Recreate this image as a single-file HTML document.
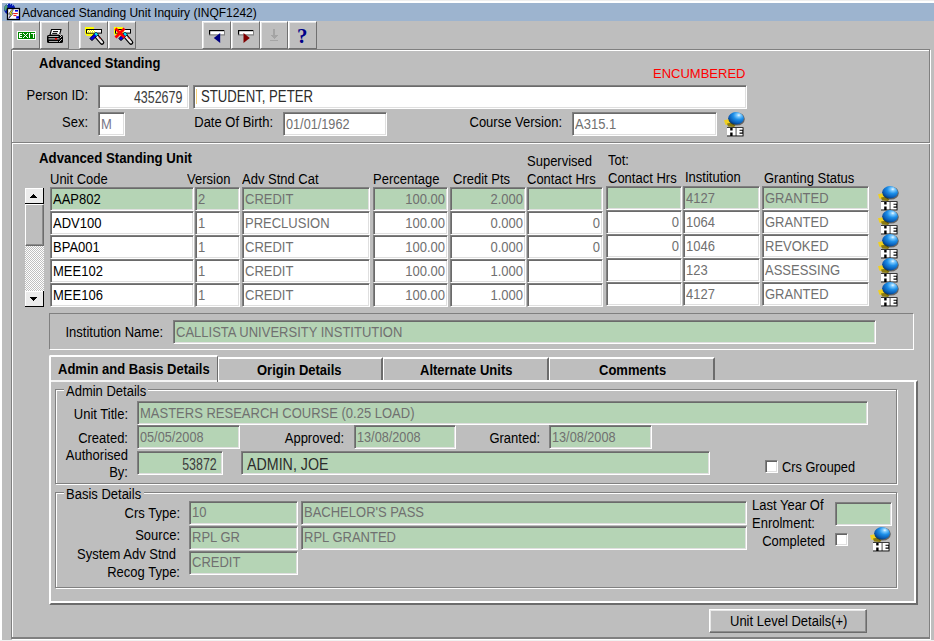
<!DOCTYPE html>
<html><head><meta charset="utf-8"><title>Advanced Standing Unit Inquiry</title>
<style>
html,body{margin:0;padding:0;width:934px;height:641px;overflow:hidden;background:#bebebe;}
body{position:relative;font-family:"Liberation Sans", sans-serif;}
body div, body svg, body span.t{position:absolute;}
div svg{position:absolute;}
span.t{white-space:pre;display:block;}
</style></head><body>
<div style="left:0;top:0;width:934px;height:641px;background:#bebebe"></div>
<div style="left:0px;top:0px;width:934px;height:3px;background:#fff"></div>
<div style="left:0px;top:0px;width:934px;height:1px;background:#eeeeee"></div>
<div style="left:0px;top:0px;width:2px;height:641px;background:#fff"></div>
<div style="left:0px;top:640px;width:934px;height:1px;background:#f0f0f0"></div>
<div style="left:2px;top:3px;width:932px;height:18px;background:#9db4cf"></div>
<svg style="left:0;top:0" width="22" height="22" viewBox="0 0 22 22">
<circle cx="9.6" cy="9" r="5.6" fill="#0018b0"/>
<path d="M4.2 7.5 Q5 5 7 4.4 L7.6 7 L5.6 11 L4.4 10 Z" fill="#50a070"/>
<path d="M7 4 h1 v1 h-1z M10 3.6 h1 v1 h-1z M12 4.4 h1 v1 h-1z" fill="#c0e0ff"/>
<rect x="7.5" y="8.5" width="12" height="11" fill="#fff" stroke="#000" stroke-width="1.3"/>
<path d="M11.8 9.6 L8.6 14.2 L10.6 14.2 L8.8 18.4 L13.4 13.2 L11.4 13.2 L13.4 9.6 Z" fill="#ffff00" stroke="#000080" stroke-width="0.6"/>
<rect x="15" y="10" width="3" height="1.6" fill="#0000e0"/>
<rect x="13.4" y="13" width="4.4" height="1.1" fill="#f02020"/>
<rect x="13.4" y="15" width="3" height="1.1" fill="#f02020"/>
<rect x="16.2" y="16.2" width="2.8" height="2.4" fill="#0000e0"/>
</svg>
<span class="t" style="left:22px;top:6px;font-size:12px;line-height:14px;color:#000;">Advanced Standing Unit Inquiry (INQF1242)</span>
<div style="left:12px;top:21px;width:28px;height:28px;box-sizing:border-box;border:1px solid;border-color:#fff #707070 #707070 #fff;box-shadow:inset 1px 1px #e4e4e4;background:#bebebe"><svg style="left:0px;top:0px" width="28" height="28" viewBox="0 0 28 28" shape-rendering="crispEdges">
<rect x="4" y="9" width="19" height="9" fill="#fff"/><rect x="5" y="10" width="17" height="7" fill="#008800"/>
<path d="M6 11h3v1h-2v1h2v1h-2v1h2v1h-3z" fill="#fff"/>
<path d="M10 11h1v1h-1zM14 11h1v1h-1zM11 12h1v1h-1zM13 12h1v1h-1zM12 13h1v1h-1zM11 14h1v1h-1zM13 14h1v1h-1zM10 15h1v1h-1zM14 15h1v1h-1z" fill="#fff"/>
<path d="M16 11h1v5h-1z" fill="#fff"/>
<path d="M18 11h4v1h-1.5v4h-1v-4h-1.5z" fill="#fff"/>
</svg></div>
<div style="left:40px;top:21px;width:29px;height:28px;box-sizing:border-box;border:1px solid;border-color:#fff #707070 #707070 #fff;box-shadow:inset 1px 1px #e4e4e4;background:#bebebe"><svg style="left:-1px;top:-1px" width="28" height="28" viewBox="0 0 28 28">
<path d="M11.5 8.5 L21 8.5 L19.5 14 L10 14 Z" fill="#fff" stroke="#000" stroke-width="1.1"/>
<path d="M13 10.6h5M12.2 12.4h5" stroke="#000" stroke-width="1"/>
<rect x="7" y="14" width="16" height="8" rx="1.6" fill="#000"/>
<rect x="8.5" y="15" width="10" height="1" fill="#b8b8b8"/>
<rect x="8.5" y="17" width="11" height="1.6" fill="#8a8a8a"/>
<rect x="15" y="17" width="2" height="1.6" fill="#ff0000"/>
<rect x="9" y="20" width="9" height="1" fill="#a8a8a8"/>
<path d="M19 13h1v1h-1zM21 13h1v1h-1zM20 14h1v1h-1zM22 15h-1v1h1zM20 16h1v1h-1zM21 18h1v1h-1zM20 19h1v1h-1zM19 20h1v1h-1z" fill="#c8c8c8"/>
</svg></div>
<div style="left:79px;top:21px;width:29px;height:28px;box-sizing:border-box;border:1px solid;border-color:#fff #707070 #707070 #fff;box-shadow:inset 1px 1px #e4e4e4;background:#bebebe"><svg style="left:-1px;top:-1px" width="28" height="28" viewBox="0 0 28 28">
<path d="M6 6 H15 V12.5 L13 15 H8 L6 13 Z" fill="#ffff00"/>
<rect x="7.5" y="8.5" width="15" height="3.6" fill="#fff" stroke="#000" stroke-width="1"/>
<path d="M8 9h1v1h-1zM10 9h1v1h-1zM12 9h1v1h-1zM14 9h1v1h-1zM9 10h1v1h-1zM11 10h1v1h-1zM13 10h1v1h-1zM15 10h1v1h-1zM8 11h1v1h-1zM10 11h1v1h-1zM12 11h1v1h-1zM14 11h1v1h-1z" fill="#ffff00"/>
<path d="M17.2 14.8 L23 21.5" stroke="#000" stroke-width="4.6" stroke-linecap="round"/>
<path d="M17.2 14.8 L22.8 21.3" stroke="#e8e8e8" stroke-width="2.4" stroke-linecap="round"/>
<path d="M20 16.4 L21.6 18" stroke="#ff0000" stroke-width="1"/>
<path d="M10.8 17.6 L17 11.2 L19.2 13.6 L13 19.6 Z" fill="#0000ee" stroke="#000" stroke-width="0.9"/>
<path d="M15.4 12.9 L17 11.3 L19 13.5 L17.4 15 Z" fill="#00e8f0"/>
</svg></div>
<div style="left:108px;top:21px;width:28px;height:28px;box-sizing:border-box;border:1px solid;border-color:#fff #707070 #707070 #fff;box-shadow:inset 1px 1px #e4e4e4;background:#bebebe"><svg style="left:-1px;top:-1px" width="28" height="28" viewBox="0 0 28 28">
<path d="M6 6 H15 V12.5 L13 15 H8 L6 13 Z" fill="#ffff00"/>
<rect x="7.5" y="8.5" width="15" height="3.6" fill="#fff" stroke="#000" stroke-width="1"/>
<path d="M8 9h1v1h-1zM10 9h1v1h-1zM12 9h1v1h-1zM14 9h1v1h-1zM9 10h1v1h-1zM11 10h1v1h-1zM13 10h1v1h-1zM15 10h1v1h-1zM8 11h1v1h-1zM10 11h1v1h-1zM12 11h1v1h-1zM14 11h1v1h-1z" fill="#ffff00"/>
<path d="M17.2 14.8 L23 21.5" stroke="#000" stroke-width="4.6" stroke-linecap="round"/>
<path d="M17.2 14.8 L22.8 21.3" stroke="#e8e8e8" stroke-width="2.4" stroke-linecap="round"/>
<path d="M20 16.4 L21.6 18" stroke="#ff0000" stroke-width="1"/>
<path d="M10.8 17.6 L17 11.2 L19.2 13.6 L13 19.6 Z" fill="#0000ee" stroke="#000" stroke-width="0.9"/>
<path d="M15.4 12.9 L17 11.3 L19 13.5 L17.4 15 Z" fill="#00e8f0"/>
<path d="M7.5 7.5 L16.5 16.5 M16.5 7.5 L7.5 16.5" stroke="#ff0000" stroke-width="2.8"/></svg></div>
<div style="left:202px;top:21px;width:29px;height:28px;box-sizing:border-box;border:1px solid;border-color:#fff #707070 #707070 #fff;box-shadow:inset 1px 1px #e4e4e4;background:#bebebe"><svg style="left:-1px;top:-1px" width="28" height="28" viewBox="0 0 28 28">
<rect x="7" y="9" width="16" height="5.5" fill="#808080"/><rect x="7" y="9" width="15" height="4.5" fill="#000"/><rect x="8.2" y="10.2" width="13.8" height="3.3" fill="#fff"/>
<path d="M18.2 12 L18.2 22 L11.8 17 Z" fill="#000080"/>
</svg></div>
<div style="left:231px;top:21px;width:29px;height:28px;box-sizing:border-box;border:1px solid;border-color:#fff #707070 #707070 #fff;box-shadow:inset 1px 1px #e4e4e4;background:#bebebe"><svg style="left:-1px;top:-1px" width="28" height="28" viewBox="0 0 28 28">
<rect x="7" y="9" width="16" height="5.5" fill="#808080"/><rect x="7" y="9" width="15" height="4.5" fill="#000"/><rect x="8.2" y="10.2" width="13.8" height="3.3" fill="#fff"/>
<path d="M12.5 12 L12.5 22 L18.8 17 Z" fill="#800000"/>
</svg></div>
<div style="left:260px;top:21px;width:28px;height:28px;box-sizing:border-box;border:1px solid;border-color:#fff #707070 #707070 #fff;box-shadow:inset 1px 1px #e4e4e4;background:#bebebe"><svg style="left:-1px;top:-1px" width="28" height="28" viewBox="0 0 28 28" shape-rendering="crispEdges">
<path d="M13 8h2v6h3l-4 4l-4-4h3z" fill="#a4a4a4"/>
<rect x="10" y="19" width="8" height="1" fill="#a4a4a4"/>
</svg></div>
<div style="left:288px;top:21px;width:29px;height:28px;box-sizing:border-box;border:1px solid;border-color:#fff #707070 #707070 #fff;box-shadow:inset 1px 1px #e4e4e4;background:#bebebe"><svg style="left:-1px;top:-1px" width="28" height="28" viewBox="0 0 28 28">
<text x="14.3" y="21.5" font-family="Liberation Serif" font-weight="bold" font-size="21" fill="#000088" text-anchor="middle">?</text>
</svg></div>
<div style="left:12px;top:143px;width:919px;height:496px;border:1px solid #fff;box-sizing:border-box"></div>
<div style="left:11px;top:142px;width:919px;height:496px;border:1px solid #808080;box-sizing:border-box"></div>
<div style="left:11px;top:638px;width:919px;height:1px;background:#808080"></div>
<div style="left:12px;top:639px;width:919px;height:1px;background:#fff"></div>
<div style="left:12px;top:50px;width:919px;height:94px;border:1px solid #fff;box-sizing:border-box"></div>
<div style="left:11px;top:49px;width:919px;height:94px;border:1px solid #808080;box-sizing:border-box"></div>
<span class="t" style="left:39px;top:56px;font-size:13px;line-height:15px;color:#000;font-weight:bold;transform:scale(1.0000,1.1000);transform-origin:0 12px;">Advanced Standing</span>
<span class="t" style="left:653px;top:66px;font-size:13px;line-height:15px;color:#ff0000;">ENCUMBERED</span>
<span class="t" style="right:846px;top:88px;font-size:13px;line-height:15px;color:#000;transform:scale(1.0000,1.1000);transform-origin:100% 12px;">Person ID:</span>
<div style="left:98px;top:85px;width:91px;height:24px;background:#fff;border:1px solid;border-color:#808080 #fff #fff #808080;box-shadow:inset 1px 1px #6a6a6a,inset -1px -1px #dfdfdf;box-sizing:border-box"></div>
<span class="t" style="right:752px;top:89px;font-size:15px;line-height:17px;color:#3c3c3c;transform:scale(0.8306,1.0800);transform-origin:100% 14px;">4352679</span>
<div style="left:193px;top:85px;width:554px;height:24px;background:#fff;border:1px solid;border-color:#808080 #fff #fff #808080;box-shadow:inset 1px 1px #6a6a6a,inset -1px -1px #dfdfdf;box-sizing:border-box"></div>
<span class="t" style="left:201px;top:88px;font-size:15px;line-height:17px;color:#2c2c2c;transform:scale(0.8783,1.0800);transform-origin:0 14px;">STUDENT, PETER</span>
<div style="left:196px;top:89px;width:1px;height:15px;background:#f6d27a"></div>
<span class="t" style="right:846px;top:115px;font-size:13px;line-height:15px;color:#000;transform:scale(1.0000,1.1000);transform-origin:100% 12px;">Sex:</span>
<div style="left:98px;top:112px;width:27px;height:24px;background:#fff;border:1px solid;border-color:#808080 #fff #fff #808080;box-shadow:inset 1px 1px #6a6a6a,inset -1px -1px #dfdfdf;box-sizing:border-box"></div>
<span class="t" style="left:101px;top:117px;font-size:13px;line-height:15px;color:#787888;transform:scale(1.0000,1.1000);transform-origin:0 12px;">M</span>
<span class="t" style="right:661px;top:115px;font-size:13px;line-height:15px;color:#000;transform:scale(1.0000,1.1000);transform-origin:100% 12px;">Date Of Birth:</span>
<div style="left:283px;top:112px;width:104px;height:24px;background:#fff;border:1px solid;border-color:#808080 #fff #fff #808080;box-shadow:inset 1px 1px #6a6a6a,inset -1px -1px #dfdfdf;box-sizing:border-box"></div>
<span class="t" style="left:286px;top:117px;font-size:13px;line-height:15px;color:#707070;transform:scale(0.9761,1.1000);transform-origin:0 12px;">01/01/1962</span>
<span class="t" style="right:372px;top:115px;font-size:13px;line-height:15px;color:#000;transform:scale(1.0000,1.1000);transform-origin:100% 12px;">Course Version:</span>
<div style="left:572px;top:112px;width:145px;height:24px;background:#fff;border:1px solid;border-color:#808080 #fff #fff #808080;box-shadow:inset 1px 1px #6a6a6a,inset -1px -1px #dfdfdf;box-sizing:border-box"></div>
<span class="t" style="left:575px;top:117px;font-size:13px;line-height:15px;color:#707070;transform:scale(1.0000,1.1000);transform-origin:0 12px;">A315.1</span>
<svg style="left:723px;top:112px" width="22" height="25" viewBox="0 0 22 25">
<defs><radialGradient id="hb723_112" cx="0.68" cy="0.25" r="0.8"><stop offset="0" stop-color="#f0faff"/><stop offset="0.16" stop-color="#7ccaff"/><stop offset="0.45" stop-color="#1c8ee8"/><stop offset="0.8" stop-color="#0a5cb4"/><stop offset="1" stop-color="#04386e"/></radialGradient></defs>
<path d="M1 8.2 L5.5 7.2 L8 11 L6.5 13 L2.5 12.8 Z" fill="#f0d020"/>
<path d="M4 11.5 L9 10.5 L12.5 13.5 L11 15 L5 14.5 Z" fill="#8a7a10"/>
<ellipse cx="13.8" cy="7" rx="8" ry="6.6" fill="#1a1a1a" opacity="0.55"/>
<ellipse cx="13" cy="6.3" rx="7.8" ry="6.2" fill="url(#hb723_112)"/>
<rect x="4" y="15.3" width="16.5" height="9.1" fill="#000"/>
<path d="M4 16h3.2v2.5h2.4v-2.5h3.1v7.6h-3.1v-3.1h-2.4v3.1h-3.2z" fill="#fff"/>
<path d="M13.4 16h6.2v1.7h-3.1v1.1h2.8v1.6h-2.8v1.4h3.1v1.8h-6.2z" fill="#fff"/>
</svg>
<span class="t" style="left:39px;top:151px;font-size:13px;line-height:15px;color:#000;font-weight:bold;transform:scale(1.0185,1.1000);transform-origin:0 12px;">Advanced Standing Unit</span>
<span class="t" style="left:50px;top:172px;font-size:13px;line-height:15px;color:#000;transform:scale(1.0000,1.1000);transform-origin:0 12px;">Unit Code</span>
<span class="t" style="left:187px;top:172px;font-size:13px;line-height:15px;color:#000;transform:scale(1.0000,1.1000);transform-origin:0 12px;">Version</span>
<span class="t" style="left:242px;top:172px;font-size:13px;line-height:15px;color:#000;transform:scale(1.0000,1.1000);transform-origin:0 12px;">Adv Stnd Cat</span>
<span class="t" style="left:373px;top:172px;font-size:13px;line-height:15px;color:#000;transform:scale(1.0000,1.1000);transform-origin:0 12px;">Percentage</span>
<span class="t" style="left:453px;top:172px;font-size:13px;line-height:15px;color:#000;transform:scale(1.0000,1.1000);transform-origin:0 12px;">Credit Pts</span>
<span class="t" style="left:527px;top:154px;font-size:13px;line-height:15px;color:#000;transform:scale(1.0000,1.1000);transform-origin:0 12px;">Supervised</span>
<span class="t" style="left:527px;top:172px;font-size:13px;line-height:15px;color:#000;transform:scale(1.0000,1.1000);transform-origin:0 12px;">Contact Hrs</span>
<span class="t" style="left:608px;top:153px;font-size:13px;line-height:15px;color:#000;transform:scale(1.0000,1.1000);transform-origin:0 12px;">Tot:</span>
<span class="t" style="left:608px;top:171px;font-size:13px;line-height:15px;color:#000;transform:scale(1.0000,1.1000);transform-origin:0 12px;">Contact Hrs</span>
<span class="t" style="left:685px;top:170px;font-size:13px;line-height:15px;color:#000;transform:scale(1.0000,1.1000);transform-origin:0 12px;">Institution</span>
<span class="t" style="left:764px;top:171px;font-size:13px;line-height:15px;color:#000;transform:scale(1.0000,1.1000);transform-origin:0 12px;">Granting Status</span>
<div style="left:25px;top:188px;width:19px;height:16px;background:#ececec;box-sizing:border-box;border-right:1px solid #000;border-bottom:1px solid #000;box-shadow:inset 1px 1px #fff">
<svg style="left:5px;top:6px" width="7" height="4" viewBox="0 0 7 4" shape-rendering="crispEdges"><path d="M3 0h1v1h1v1h1v1h1v1h-7v-1h1v-1h1v-1h1z" fill="#000"/></svg></div>
<div style="left:25px;top:204px;width:19px;height:42px;background:#bebebe;box-sizing:border-box;border:1px solid;border-color:#fff #6c6c6c #6c6c6c #fff;box-shadow:inset -1px -1px #8c8c8c"></div>
<div style="left:25px;top:246px;width:19px;height:45px;background-color:#fff;background-image:repeating-conic-gradient(#c0c0c0 0 25%, #fff 0 50%);background-size:2px 2px;"></div>
<div style="left:25px;top:291px;width:19px;height:16px;background:#ececec;box-sizing:border-box;border-right:1px solid #000;border-bottom:1px solid #000;box-shadow:inset 1px 1px #fff">
<svg style="left:5px;top:6px" width="7" height="4" viewBox="0 0 7 4" shape-rendering="crispEdges"><path d="M0 0h7v1h-1v1h-1v1h-1v1h-1v-1h-1v-1h-1v-1h-1z" fill="#000"/></svg></div>
<div style="left:50px;top:187px;width:144px;height:24px;background:#b5d4b5;border:1px solid;border-color:#808080 #fff #fff #808080;box-shadow:inset 1px 1px #6a6a6a,inset -1px -1px #dfdfdf;box-sizing:border-box"></div>
<span class="t" style="left:53px;top:192px;font-size:13px;line-height:15px;color:#000;transform:scale(1.0000,1.1000);transform-origin:0 12px;">AAP802</span>
<div style="left:195px;top:187px;width:45px;height:24px;background:#b5d4b5;border:1px solid;border-color:#808080 #fff #fff #808080;box-shadow:inset 1px 1px #6a6a6a,inset -1px -1px #dfdfdf;box-sizing:border-box"></div>
<span class="t" style="left:198px;top:192px;font-size:13px;line-height:15px;color:#707070;transform:scale(1.0000,1.1000);transform-origin:0 12px;">2</span>
<div style="left:242px;top:187px;width:128px;height:24px;background:#b5d4b5;border:1px solid;border-color:#808080 #fff #fff #808080;box-shadow:inset 1px 1px #6a6a6a,inset -1px -1px #dfdfdf;box-sizing:border-box"></div>
<span class="t" style="left:245px;top:192px;font-size:13px;line-height:15px;color:#707070;transform:scale(1.0000,1.1000);transform-origin:0 12px;">CREDIT</span>
<div style="left:373px;top:187px;width:75px;height:24px;background:#b5d4b5;border:1px solid;border-color:#808080 #fff #fff #808080;box-shadow:inset 1px 1px #6a6a6a,inset -1px -1px #dfdfdf;box-sizing:border-box"></div>
<span class="t" style="right:489px;top:192px;font-size:13px;line-height:15px;color:#707070;transform:scale(1.0000,1.1000);transform-origin:100% 12px;">100.00</span>
<div style="left:450px;top:187px;width:76px;height:24px;background:#b5d4b5;border:1px solid;border-color:#808080 #fff #fff #808080;box-shadow:inset 1px 1px #6a6a6a,inset -1px -1px #dfdfdf;box-sizing:border-box"></div>
<span class="t" style="right:411px;top:192px;font-size:13px;line-height:15px;color:#707070;transform:scale(1.0000,1.1000);transform-origin:100% 12px;">2.000</span>
<div style="left:527px;top:187px;width:76px;height:24px;background:#b5d4b5;border:1px solid;border-color:#808080 #fff #fff #808080;box-shadow:inset 1px 1px #6a6a6a,inset -1px -1px #dfdfdf;box-sizing:border-box"></div>
<div style="left:606px;top:186px;width:76px;height:24px;background:#b5d4b5;border:1px solid;border-color:#808080 #fff #fff #808080;box-shadow:inset 1px 1px #6a6a6a,inset -1px -1px #dfdfdf;box-sizing:border-box"></div>
<div style="left:683px;top:186px;width:77px;height:24px;background:#b5d4b5;border:1px solid;border-color:#808080 #fff #fff #808080;box-shadow:inset 1px 1px #6a6a6a,inset -1px -1px #dfdfdf;box-sizing:border-box"></div>
<span class="t" style="left:686px;top:191px;font-size:13px;line-height:15px;color:#707070;transform:scale(1.0000,1.1000);transform-origin:0 12px;">4127</span>
<div style="left:762px;top:186px;width:107px;height:24px;background:#b5d4b5;border:1px solid;border-color:#808080 #fff #fff #808080;box-shadow:inset 1px 1px #6a6a6a,inset -1px -1px #dfdfdf;box-sizing:border-box"></div>
<span class="t" style="left:765px;top:191px;font-size:13px;line-height:15px;color:#707070;transform:scale(1.0000,1.1000);transform-origin:0 12px;">GRANTED</span>
<svg style="left:877px;top:186px" width="22" height="25" viewBox="0 0 22 25">
<defs><radialGradient id="hb877_186" cx="0.68" cy="0.25" r="0.8"><stop offset="0" stop-color="#f0faff"/><stop offset="0.16" stop-color="#7ccaff"/><stop offset="0.45" stop-color="#1c8ee8"/><stop offset="0.8" stop-color="#0a5cb4"/><stop offset="1" stop-color="#04386e"/></radialGradient></defs>
<path d="M1 8.2 L5.5 7.2 L8 11 L6.5 13 L2.5 12.8 Z" fill="#f0d020"/>
<path d="M4 11.5 L9 10.5 L12.5 13.5 L11 15 L5 14.5 Z" fill="#8a7a10"/>
<ellipse cx="13.8" cy="7" rx="8" ry="6.6" fill="#1a1a1a" opacity="0.55"/>
<ellipse cx="13" cy="6.3" rx="7.8" ry="6.2" fill="url(#hb877_186)"/>
<rect x="4" y="15.3" width="16.5" height="9.1" fill="#000"/>
<path d="M4 16h3.2v2.5h2.4v-2.5h3.1v7.6h-3.1v-3.1h-2.4v3.1h-3.2z" fill="#fff"/>
<path d="M13.4 16h6.2v1.7h-3.1v1.1h2.8v1.6h-2.8v1.4h3.1v1.8h-6.2z" fill="#fff"/>
</svg>
<div style="left:50px;top:211px;width:144px;height:24px;background:#fff;border:1px solid;border-color:#808080 #fff #fff #808080;box-shadow:inset 1px 1px #6a6a6a,inset -1px -1px #dfdfdf;box-sizing:border-box"></div>
<span class="t" style="left:53px;top:216px;font-size:13px;line-height:15px;color:#000;transform:scale(1.0000,1.1000);transform-origin:0 12px;">ADV100</span>
<div style="left:195px;top:211px;width:45px;height:24px;background:#fff;border:1px solid;border-color:#808080 #fff #fff #808080;box-shadow:inset 1px 1px #6a6a6a,inset -1px -1px #dfdfdf;box-sizing:border-box"></div>
<span class="t" style="left:198px;top:216px;font-size:13px;line-height:15px;color:#707070;transform:scale(1.0000,1.1000);transform-origin:0 12px;">1</span>
<div style="left:242px;top:211px;width:128px;height:24px;background:#fff;border:1px solid;border-color:#808080 #fff #fff #808080;box-shadow:inset 1px 1px #6a6a6a,inset -1px -1px #dfdfdf;box-sizing:border-box"></div>
<span class="t" style="left:245px;top:216px;font-size:13px;line-height:15px;color:#707070;transform:scale(1.0000,1.1000);transform-origin:0 12px;">PRECLUSION</span>
<div style="left:373px;top:211px;width:75px;height:24px;background:#fff;border:1px solid;border-color:#808080 #fff #fff #808080;box-shadow:inset 1px 1px #6a6a6a,inset -1px -1px #dfdfdf;box-sizing:border-box"></div>
<span class="t" style="right:489px;top:216px;font-size:13px;line-height:15px;color:#707070;transform:scale(1.0000,1.1000);transform-origin:100% 12px;">100.00</span>
<div style="left:450px;top:211px;width:76px;height:24px;background:#fff;border:1px solid;border-color:#808080 #fff #fff #808080;box-shadow:inset 1px 1px #6a6a6a,inset -1px -1px #dfdfdf;box-sizing:border-box"></div>
<span class="t" style="right:411px;top:216px;font-size:13px;line-height:15px;color:#707070;transform:scale(1.0000,1.1000);transform-origin:100% 12px;">0.000</span>
<div style="left:527px;top:211px;width:76px;height:24px;background:#fff;border:1px solid;border-color:#808080 #fff #fff #808080;box-shadow:inset 1px 1px #6a6a6a,inset -1px -1px #dfdfdf;box-sizing:border-box"></div>
<span class="t" style="right:334px;top:216px;font-size:13px;line-height:15px;color:#707070;transform:scale(1.0000,1.1000);transform-origin:100% 12px;">0</span>
<div style="left:606px;top:210px;width:76px;height:24px;background:#fff;border:1px solid;border-color:#808080 #fff #fff #808080;box-shadow:inset 1px 1px #6a6a6a,inset -1px -1px #dfdfdf;box-sizing:border-box"></div>
<span class="t" style="right:255px;top:215px;font-size:13px;line-height:15px;color:#707070;transform:scale(1.0000,1.1000);transform-origin:100% 12px;">0</span>
<div style="left:683px;top:210px;width:77px;height:24px;background:#fff;border:1px solid;border-color:#808080 #fff #fff #808080;box-shadow:inset 1px 1px #6a6a6a,inset -1px -1px #dfdfdf;box-sizing:border-box"></div>
<span class="t" style="left:686px;top:215px;font-size:13px;line-height:15px;color:#707070;transform:scale(1.0000,1.1000);transform-origin:0 12px;">1064</span>
<div style="left:762px;top:210px;width:107px;height:24px;background:#fff;border:1px solid;border-color:#808080 #fff #fff #808080;box-shadow:inset 1px 1px #6a6a6a,inset -1px -1px #dfdfdf;box-sizing:border-box"></div>
<span class="t" style="left:765px;top:215px;font-size:13px;line-height:15px;color:#707070;transform:scale(1.0000,1.1000);transform-origin:0 12px;">GRANTED</span>
<svg style="left:877px;top:210px" width="22" height="25" viewBox="0 0 22 25">
<defs><radialGradient id="hb877_210" cx="0.68" cy="0.25" r="0.8"><stop offset="0" stop-color="#f0faff"/><stop offset="0.16" stop-color="#7ccaff"/><stop offset="0.45" stop-color="#1c8ee8"/><stop offset="0.8" stop-color="#0a5cb4"/><stop offset="1" stop-color="#04386e"/></radialGradient></defs>
<path d="M1 8.2 L5.5 7.2 L8 11 L6.5 13 L2.5 12.8 Z" fill="#f0d020"/>
<path d="M4 11.5 L9 10.5 L12.5 13.5 L11 15 L5 14.5 Z" fill="#8a7a10"/>
<ellipse cx="13.8" cy="7" rx="8" ry="6.6" fill="#1a1a1a" opacity="0.55"/>
<ellipse cx="13" cy="6.3" rx="7.8" ry="6.2" fill="url(#hb877_210)"/>
<rect x="4" y="15.3" width="16.5" height="9.1" fill="#000"/>
<path d="M4 16h3.2v2.5h2.4v-2.5h3.1v7.6h-3.1v-3.1h-2.4v3.1h-3.2z" fill="#fff"/>
<path d="M13.4 16h6.2v1.7h-3.1v1.1h2.8v1.6h-2.8v1.4h3.1v1.8h-6.2z" fill="#fff"/>
</svg>
<div style="left:50px;top:235px;width:144px;height:24px;background:#fff;border:1px solid;border-color:#808080 #fff #fff #808080;box-shadow:inset 1px 1px #6a6a6a,inset -1px -1px #dfdfdf;box-sizing:border-box"></div>
<span class="t" style="left:53px;top:240px;font-size:13px;line-height:15px;color:#000;transform:scale(1.0000,1.1000);transform-origin:0 12px;">BPA001</span>
<div style="left:195px;top:235px;width:45px;height:24px;background:#fff;border:1px solid;border-color:#808080 #fff #fff #808080;box-shadow:inset 1px 1px #6a6a6a,inset -1px -1px #dfdfdf;box-sizing:border-box"></div>
<span class="t" style="left:198px;top:240px;font-size:13px;line-height:15px;color:#707070;transform:scale(1.0000,1.1000);transform-origin:0 12px;">1</span>
<div style="left:242px;top:235px;width:128px;height:24px;background:#fff;border:1px solid;border-color:#808080 #fff #fff #808080;box-shadow:inset 1px 1px #6a6a6a,inset -1px -1px #dfdfdf;box-sizing:border-box"></div>
<span class="t" style="left:245px;top:240px;font-size:13px;line-height:15px;color:#707070;transform:scale(1.0000,1.1000);transform-origin:0 12px;">CREDIT</span>
<div style="left:373px;top:235px;width:75px;height:24px;background:#fff;border:1px solid;border-color:#808080 #fff #fff #808080;box-shadow:inset 1px 1px #6a6a6a,inset -1px -1px #dfdfdf;box-sizing:border-box"></div>
<span class="t" style="right:489px;top:240px;font-size:13px;line-height:15px;color:#707070;transform:scale(1.0000,1.1000);transform-origin:100% 12px;">100.00</span>
<div style="left:450px;top:235px;width:76px;height:24px;background:#fff;border:1px solid;border-color:#808080 #fff #fff #808080;box-shadow:inset 1px 1px #6a6a6a,inset -1px -1px #dfdfdf;box-sizing:border-box"></div>
<span class="t" style="right:411px;top:240px;font-size:13px;line-height:15px;color:#707070;transform:scale(1.0000,1.1000);transform-origin:100% 12px;">0.000</span>
<div style="left:527px;top:235px;width:76px;height:24px;background:#fff;border:1px solid;border-color:#808080 #fff #fff #808080;box-shadow:inset 1px 1px #6a6a6a,inset -1px -1px #dfdfdf;box-sizing:border-box"></div>
<span class="t" style="right:334px;top:240px;font-size:13px;line-height:15px;color:#707070;transform:scale(1.0000,1.1000);transform-origin:100% 12px;">0</span>
<div style="left:606px;top:234px;width:76px;height:24px;background:#fff;border:1px solid;border-color:#808080 #fff #fff #808080;box-shadow:inset 1px 1px #6a6a6a,inset -1px -1px #dfdfdf;box-sizing:border-box"></div>
<span class="t" style="right:255px;top:239px;font-size:13px;line-height:15px;color:#707070;transform:scale(1.0000,1.1000);transform-origin:100% 12px;">0</span>
<div style="left:683px;top:234px;width:77px;height:24px;background:#fff;border:1px solid;border-color:#808080 #fff #fff #808080;box-shadow:inset 1px 1px #6a6a6a,inset -1px -1px #dfdfdf;box-sizing:border-box"></div>
<span class="t" style="left:686px;top:239px;font-size:13px;line-height:15px;color:#707070;transform:scale(1.0000,1.1000);transform-origin:0 12px;">1046</span>
<div style="left:762px;top:234px;width:107px;height:24px;background:#fff;border:1px solid;border-color:#808080 #fff #fff #808080;box-shadow:inset 1px 1px #6a6a6a,inset -1px -1px #dfdfdf;box-sizing:border-box"></div>
<span class="t" style="left:765px;top:239px;font-size:13px;line-height:15px;color:#707070;transform:scale(1.0000,1.1000);transform-origin:0 12px;">REVOKED</span>
<svg style="left:877px;top:234px" width="22" height="25" viewBox="0 0 22 25">
<defs><radialGradient id="hb877_234" cx="0.68" cy="0.25" r="0.8"><stop offset="0" stop-color="#f0faff"/><stop offset="0.16" stop-color="#7ccaff"/><stop offset="0.45" stop-color="#1c8ee8"/><stop offset="0.8" stop-color="#0a5cb4"/><stop offset="1" stop-color="#04386e"/></radialGradient></defs>
<path d="M1 8.2 L5.5 7.2 L8 11 L6.5 13 L2.5 12.8 Z" fill="#f0d020"/>
<path d="M4 11.5 L9 10.5 L12.5 13.5 L11 15 L5 14.5 Z" fill="#8a7a10"/>
<ellipse cx="13.8" cy="7" rx="8" ry="6.6" fill="#1a1a1a" opacity="0.55"/>
<ellipse cx="13" cy="6.3" rx="7.8" ry="6.2" fill="url(#hb877_234)"/>
<rect x="4" y="15.3" width="16.5" height="9.1" fill="#000"/>
<path d="M4 16h3.2v2.5h2.4v-2.5h3.1v7.6h-3.1v-3.1h-2.4v3.1h-3.2z" fill="#fff"/>
<path d="M13.4 16h6.2v1.7h-3.1v1.1h2.8v1.6h-2.8v1.4h3.1v1.8h-6.2z" fill="#fff"/>
</svg>
<div style="left:50px;top:259px;width:144px;height:24px;background:#fff;border:1px solid;border-color:#808080 #fff #fff #808080;box-shadow:inset 1px 1px #6a6a6a,inset -1px -1px #dfdfdf;box-sizing:border-box"></div>
<span class="t" style="left:53px;top:264px;font-size:13px;line-height:15px;color:#000;transform:scale(1.0000,1.1000);transform-origin:0 12px;">MEE102</span>
<div style="left:195px;top:259px;width:45px;height:24px;background:#fff;border:1px solid;border-color:#808080 #fff #fff #808080;box-shadow:inset 1px 1px #6a6a6a,inset -1px -1px #dfdfdf;box-sizing:border-box"></div>
<span class="t" style="left:198px;top:264px;font-size:13px;line-height:15px;color:#707070;transform:scale(1.0000,1.1000);transform-origin:0 12px;">1</span>
<div style="left:242px;top:259px;width:128px;height:24px;background:#fff;border:1px solid;border-color:#808080 #fff #fff #808080;box-shadow:inset 1px 1px #6a6a6a,inset -1px -1px #dfdfdf;box-sizing:border-box"></div>
<span class="t" style="left:245px;top:264px;font-size:13px;line-height:15px;color:#707070;transform:scale(1.0000,1.1000);transform-origin:0 12px;">CREDIT</span>
<div style="left:373px;top:259px;width:75px;height:24px;background:#fff;border:1px solid;border-color:#808080 #fff #fff #808080;box-shadow:inset 1px 1px #6a6a6a,inset -1px -1px #dfdfdf;box-sizing:border-box"></div>
<span class="t" style="right:489px;top:264px;font-size:13px;line-height:15px;color:#707070;transform:scale(1.0000,1.1000);transform-origin:100% 12px;">100.00</span>
<div style="left:450px;top:259px;width:76px;height:24px;background:#fff;border:1px solid;border-color:#808080 #fff #fff #808080;box-shadow:inset 1px 1px #6a6a6a,inset -1px -1px #dfdfdf;box-sizing:border-box"></div>
<span class="t" style="right:411px;top:264px;font-size:13px;line-height:15px;color:#707070;transform:scale(1.0000,1.1000);transform-origin:100% 12px;">1.000</span>
<div style="left:527px;top:259px;width:76px;height:24px;background:#fff;border:1px solid;border-color:#808080 #fff #fff #808080;box-shadow:inset 1px 1px #6a6a6a,inset -1px -1px #dfdfdf;box-sizing:border-box"></div>
<div style="left:606px;top:258px;width:76px;height:24px;background:#fff;border:1px solid;border-color:#808080 #fff #fff #808080;box-shadow:inset 1px 1px #6a6a6a,inset -1px -1px #dfdfdf;box-sizing:border-box"></div>
<div style="left:683px;top:258px;width:77px;height:24px;background:#fff;border:1px solid;border-color:#808080 #fff #fff #808080;box-shadow:inset 1px 1px #6a6a6a,inset -1px -1px #dfdfdf;box-sizing:border-box"></div>
<span class="t" style="left:686px;top:263px;font-size:13px;line-height:15px;color:#707070;transform:scale(1.0000,1.1000);transform-origin:0 12px;">123</span>
<div style="left:762px;top:258px;width:107px;height:24px;background:#fff;border:1px solid;border-color:#808080 #fff #fff #808080;box-shadow:inset 1px 1px #6a6a6a,inset -1px -1px #dfdfdf;box-sizing:border-box"></div>
<span class="t" style="left:765px;top:263px;font-size:13px;line-height:15px;color:#707070;transform:scale(1.0000,1.1000);transform-origin:0 12px;">ASSESSING</span>
<svg style="left:877px;top:258px" width="22" height="25" viewBox="0 0 22 25">
<defs><radialGradient id="hb877_258" cx="0.68" cy="0.25" r="0.8"><stop offset="0" stop-color="#f0faff"/><stop offset="0.16" stop-color="#7ccaff"/><stop offset="0.45" stop-color="#1c8ee8"/><stop offset="0.8" stop-color="#0a5cb4"/><stop offset="1" stop-color="#04386e"/></radialGradient></defs>
<path d="M1 8.2 L5.5 7.2 L8 11 L6.5 13 L2.5 12.8 Z" fill="#f0d020"/>
<path d="M4 11.5 L9 10.5 L12.5 13.5 L11 15 L5 14.5 Z" fill="#8a7a10"/>
<ellipse cx="13.8" cy="7" rx="8" ry="6.6" fill="#1a1a1a" opacity="0.55"/>
<ellipse cx="13" cy="6.3" rx="7.8" ry="6.2" fill="url(#hb877_258)"/>
<rect x="4" y="15.3" width="16.5" height="9.1" fill="#000"/>
<path d="M4 16h3.2v2.5h2.4v-2.5h3.1v7.6h-3.1v-3.1h-2.4v3.1h-3.2z" fill="#fff"/>
<path d="M13.4 16h6.2v1.7h-3.1v1.1h2.8v1.6h-2.8v1.4h3.1v1.8h-6.2z" fill="#fff"/>
</svg>
<div style="left:50px;top:283px;width:144px;height:24px;background:#fff;border:1px solid;border-color:#808080 #fff #fff #808080;box-shadow:inset 1px 1px #6a6a6a,inset -1px -1px #dfdfdf;box-sizing:border-box"></div>
<span class="t" style="left:53px;top:288px;font-size:13px;line-height:15px;color:#000;transform:scale(1.0000,1.1000);transform-origin:0 12px;">MEE106</span>
<div style="left:195px;top:283px;width:45px;height:24px;background:#fff;border:1px solid;border-color:#808080 #fff #fff #808080;box-shadow:inset 1px 1px #6a6a6a,inset -1px -1px #dfdfdf;box-sizing:border-box"></div>
<span class="t" style="left:198px;top:288px;font-size:13px;line-height:15px;color:#707070;transform:scale(1.0000,1.1000);transform-origin:0 12px;">1</span>
<div style="left:242px;top:283px;width:128px;height:24px;background:#fff;border:1px solid;border-color:#808080 #fff #fff #808080;box-shadow:inset 1px 1px #6a6a6a,inset -1px -1px #dfdfdf;box-sizing:border-box"></div>
<span class="t" style="left:245px;top:288px;font-size:13px;line-height:15px;color:#707070;transform:scale(1.0000,1.1000);transform-origin:0 12px;">CREDIT</span>
<div style="left:373px;top:283px;width:75px;height:24px;background:#fff;border:1px solid;border-color:#808080 #fff #fff #808080;box-shadow:inset 1px 1px #6a6a6a,inset -1px -1px #dfdfdf;box-sizing:border-box"></div>
<span class="t" style="right:489px;top:288px;font-size:13px;line-height:15px;color:#707070;transform:scale(1.0000,1.1000);transform-origin:100% 12px;">100.00</span>
<div style="left:450px;top:283px;width:76px;height:24px;background:#fff;border:1px solid;border-color:#808080 #fff #fff #808080;box-shadow:inset 1px 1px #6a6a6a,inset -1px -1px #dfdfdf;box-sizing:border-box"></div>
<span class="t" style="right:411px;top:288px;font-size:13px;line-height:15px;color:#707070;transform:scale(1.0000,1.1000);transform-origin:100% 12px;">1.000</span>
<div style="left:527px;top:283px;width:76px;height:24px;background:#fff;border:1px solid;border-color:#808080 #fff #fff #808080;box-shadow:inset 1px 1px #6a6a6a,inset -1px -1px #dfdfdf;box-sizing:border-box"></div>
<div style="left:606px;top:282px;width:76px;height:24px;background:#fff;border:1px solid;border-color:#808080 #fff #fff #808080;box-shadow:inset 1px 1px #6a6a6a,inset -1px -1px #dfdfdf;box-sizing:border-box"></div>
<div style="left:683px;top:282px;width:77px;height:24px;background:#fff;border:1px solid;border-color:#808080 #fff #fff #808080;box-shadow:inset 1px 1px #6a6a6a,inset -1px -1px #dfdfdf;box-sizing:border-box"></div>
<span class="t" style="left:686px;top:287px;font-size:13px;line-height:15px;color:#707070;transform:scale(1.0000,1.1000);transform-origin:0 12px;">4127</span>
<div style="left:762px;top:282px;width:107px;height:24px;background:#fff;border:1px solid;border-color:#808080 #fff #fff #808080;box-shadow:inset 1px 1px #6a6a6a,inset -1px -1px #dfdfdf;box-sizing:border-box"></div>
<span class="t" style="left:765px;top:287px;font-size:13px;line-height:15px;color:#707070;transform:scale(1.0000,1.1000);transform-origin:0 12px;">GRANTED</span>
<svg style="left:877px;top:282px" width="22" height="25" viewBox="0 0 22 25">
<defs><radialGradient id="hb877_282" cx="0.68" cy="0.25" r="0.8"><stop offset="0" stop-color="#f0faff"/><stop offset="0.16" stop-color="#7ccaff"/><stop offset="0.45" stop-color="#1c8ee8"/><stop offset="0.8" stop-color="#0a5cb4"/><stop offset="1" stop-color="#04386e"/></radialGradient></defs>
<path d="M1 8.2 L5.5 7.2 L8 11 L6.5 13 L2.5 12.8 Z" fill="#f0d020"/>
<path d="M4 11.5 L9 10.5 L12.5 13.5 L11 15 L5 14.5 Z" fill="#8a7a10"/>
<ellipse cx="13.8" cy="7" rx="8" ry="6.6" fill="#1a1a1a" opacity="0.55"/>
<ellipse cx="13" cy="6.3" rx="7.8" ry="6.2" fill="url(#hb877_282)"/>
<rect x="4" y="15.3" width="16.5" height="9.1" fill="#000"/>
<path d="M4 16h3.2v2.5h2.4v-2.5h3.1v7.6h-3.1v-3.1h-2.4v3.1h-3.2z" fill="#fff"/>
<path d="M13.4 16h6.2v1.7h-3.1v1.1h2.8v1.6h-2.8v1.4h3.1v1.8h-6.2z" fill="#fff"/>
</svg>
<div style="left:49px;top:313px;width:865px;height:37px;border:1px solid;border-color:#808080 #fff #fff #808080;box-sizing:border-box"></div>
<span class="t" style="right:771px;top:325px;font-size:13px;line-height:15px;color:#000;transform:scale(1.0000,1.1000);transform-origin:100% 12px;">Institution Name:</span>
<div style="left:173px;top:320px;width:703px;height:24px;background:#b5d4b5;border:1px solid;border-color:#808080 #fff #fff #808080;box-shadow:inset 1px 1px #6a6a6a,inset -1px -1px #dfdfdf;box-sizing:border-box"></div>
<span class="t" style="left:176px;top:325px;font-size:13px;line-height:15px;color:#707070;transform:scale(1.0000,1.1000);transform-origin:0 12px;">CALLISTA UNIVERSITY INSTITUTION</span>
<div style="left:49px;top:380px;width:869px;height:225px;box-sizing:border-box;border-top:2px solid #fff;border-left:2px solid #fff;border-right:2px solid #6c6c6c;border-bottom:2px solid #6c6c6c;box-shadow:inset -2px -2px #fff"></div>
<div style="left:218px;top:357px;width:165px;height:23px;box-sizing:border-box;background:#bebebe;border-top:2px solid #fff;border-left:1px solid #fff;border-right:2px solid #6c6c6c"></div>
<span class="t" style="left:257px;top:363px;font-size:13px;line-height:15px;color:#000;font-weight:bold;transform:scale(1.0000,1.1000);transform-origin:0 12px;">Origin Details</span>
<div style="left:383px;top:357px;width:166px;height:23px;box-sizing:border-box;background:#bebebe;border-top:2px solid #fff;border-left:1px solid #fff;border-right:2px solid #6c6c6c"></div>
<span class="t" style="left:420px;top:363px;font-size:13px;line-height:15px;color:#000;font-weight:bold;transform:scale(1.0000,1.1000);transform-origin:0 12px;">Alternate Units</span>
<div style="left:549px;top:357px;width:166px;height:23px;box-sizing:border-box;background:#bebebe;border-top:2px solid #fff;border-left:1px solid #fff;border-right:2px solid #6c6c6c"></div>
<span class="t" style="left:599px;top:363px;font-size:13px;line-height:15px;color:#000;font-weight:bold;transform:scale(1.0000,1.1000);transform-origin:0 12px;">Comments</span>
<div style="left:49px;top:355px;width:169px;height:27px;box-sizing:border-box;background:#bebebe;border-top:2px solid #fff;border-left:2px solid #fff;border-right:1px solid #6c6c6c;border-top-left-radius:2px"></div>
<span class="t" style="left:58px;top:362px;font-size:13px;line-height:15px;color:#000;font-weight:bold;transform:scale(1.0000,1.1000);transform-origin:0 12px;">Admin and Basis Details</span>
<div style="left:51px;top:380px;width:166px;height:2px;background:#f4f4f4"></div>
<div style="left:56px;top:390px;width:842px;height:95px;border:1px solid #fff;box-sizing:border-box"></div>
<div style="left:55px;top:389px;width:842px;height:95px;border:1px solid #808080;box-sizing:border-box"></div>
<span class="t" style="left:64px;top:383px;width:84px;height:14px;background:#bebebe"></span>
<span class="t" style="left:66px;top:384px;font-size:13px;line-height:15px;color:#000;transform:scale(1.0000,1.1000);transform-origin:0 12px;">Admin Details</span>
<span class="t" style="right:806px;top:407px;font-size:13px;line-height:15px;color:#000;transform:scale(1.0000,1.1000);transform-origin:100% 12px;">Unit Title:</span>
<div style="left:137px;top:401px;width:731px;height:24px;background:#b5d4b5;border:1px solid;border-color:#808080 #fff #fff #808080;box-shadow:inset 1px 1px #6a6a6a,inset -1px -1px #dfdfdf;box-sizing:border-box"></div>
<span class="t" style="left:140px;top:406px;font-size:13px;line-height:15px;color:#707070;transform:scale(1.0000,1.1000);transform-origin:0 12px;">MASTERS RESEARCH COURSE (0.25 LOAD)</span>
<span class="t" style="right:806px;top:431px;font-size:13px;line-height:15px;color:#000;transform:scale(1.0000,1.1000);transform-origin:100% 12px;">Created:</span>
<div style="left:137px;top:425px;width:103px;height:24px;background:#b5d4b5;border:1px solid;border-color:#808080 #fff #fff #808080;box-shadow:inset 1px 1px #6a6a6a,inset -1px -1px #dfdfdf;box-sizing:border-box"></div>
<span class="t" style="left:140px;top:430px;font-size:13px;line-height:15px;color:#707070;transform:scale(0.9761,1.1000);transform-origin:0 12px;">05/05/2008</span>
<span class="t" style="right:590px;top:431px;font-size:13px;line-height:15px;color:#000;transform:scale(1.0000,1.1000);transform-origin:100% 12px;">Approved:</span>
<div style="left:354px;top:425px;width:102px;height:24px;background:#b5d4b5;border:1px solid;border-color:#808080 #fff #fff #808080;box-shadow:inset 1px 1px #6a6a6a,inset -1px -1px #dfdfdf;box-sizing:border-box"></div>
<span class="t" style="left:357px;top:430px;font-size:13px;line-height:15px;color:#707070;transform:scale(0.9761,1.1000);transform-origin:0 12px;">13/08/2008</span>
<span class="t" style="right:394px;top:431px;font-size:13px;line-height:15px;color:#000;transform:scale(1.0000,1.1000);transform-origin:100% 12px;">Granted:</span>
<div style="left:549px;top:425px;width:103px;height:24px;background:#b5d4b5;border:1px solid;border-color:#808080 #fff #fff #808080;box-shadow:inset 1px 1px #6a6a6a,inset -1px -1px #dfdfdf;box-sizing:border-box"></div>
<span class="t" style="left:552px;top:430px;font-size:13px;line-height:15px;color:#707070;transform:scale(0.9761,1.1000);transform-origin:0 12px;">13/08/2008</span>
<span class="t" style="right:806px;top:448px;font-size:13px;line-height:15px;color:#000;transform:scale(1.0000,1.1000);transform-origin:100% 12px;">Authorised</span>
<span class="t" style="right:806px;top:465px;font-size:13px;line-height:15px;color:#000;transform:scale(1.0000,1.1000);transform-origin:100% 12px;">By:</span>
<div style="left:137px;top:451px;width:86px;height:24px;background:#b5d4b5;border:1px solid;border-color:#808080 #fff #fff #808080;box-shadow:inset 1px 1px #6a6a6a,inset -1px -1px #dfdfdf;box-sizing:border-box"></div>
<span class="t" style="right:717px;top:456px;font-size:15px;line-height:17px;color:#3c3c3c;transform:scale(0.8272,1.0800);transform-origin:100% 14px;">53872</span>
<div style="left:241px;top:451px;width:469px;height:24px;background:#b5d4b5;border:1px solid;border-color:#808080 #fff #fff #808080;box-shadow:inset 1px 1px #6a6a6a,inset -1px -1px #dfdfdf;box-sizing:border-box"></div>
<span class="t" style="left:247px;top:456px;font-size:15px;line-height:17px;color:#2c2c2c;transform:scale(0.9494,1.0800);transform-origin:0 14px;">ADMIN, JOE</span>
<div style="left:765px;top:460px;width:13px;height:13px;background:#fff;box-sizing:border-box;border:1px solid;border-color:#808080 #fff #fff #808080;box-shadow:inset 1px 1px #646464,inset -1px -1px #dfdfdf"></div>
<span class="t" style="left:782px;top:460px;font-size:13px;line-height:15px;color:#000;transform:scale(0.9810,1.1000);transform-origin:0 12px;">Crs Grouped</span>
<div style="left:56px;top:493px;width:842px;height:96px;border:1px solid #fff;box-sizing:border-box"></div>
<div style="left:55px;top:492px;width:842px;height:96px;border:1px solid #808080;box-sizing:border-box"></div>
<span class="t" style="left:64px;top:486px;width:80px;height:14px;background:#bebebe"></span>
<span class="t" style="left:66px;top:487px;font-size:13px;line-height:15px;color:#000;transform:scale(1.0000,1.1000);transform-origin:0 12px;">Basis Details</span>
<span class="t" style="right:754px;top:506px;font-size:13px;line-height:15px;color:#000;transform:scale(1.0000,1.1000);transform-origin:100% 12px;">Crs Type:</span>
<div style="left:189px;top:501px;width:109px;height:24px;background:#b5d4b5;border:1px solid;border-color:#808080 #fff #fff #808080;box-shadow:inset 1px 1px #6a6a6a,inset -1px -1px #dfdfdf;box-sizing:border-box"></div>
<span class="t" style="left:192px;top:505px;font-size:13px;line-height:15px;color:#707070;transform:scale(1.0000,1.1000);transform-origin:0 12px;">10</span>
<div style="left:301px;top:501px;width:446px;height:24px;background:#b5d4b5;border:1px solid;border-color:#808080 #fff #fff #808080;box-shadow:inset 1px 1px #6a6a6a,inset -1px -1px #dfdfdf;box-sizing:border-box"></div>
<span class="t" style="left:304px;top:505px;font-size:13px;line-height:15px;color:#707070;transform:scale(1.0000,1.1000);transform-origin:0 12px;">BACHELOR&#x27;S PASS</span>
<span class="t" style="right:754px;top:528px;font-size:13px;line-height:15px;color:#000;transform:scale(1.0000,1.1000);transform-origin:100% 12px;">Source:</span>
<div style="left:189px;top:526px;width:109px;height:24px;background:#b5d4b5;border:1px solid;border-color:#808080 #fff #fff #808080;box-shadow:inset 1px 1px #6a6a6a,inset -1px -1px #dfdfdf;box-sizing:border-box"></div>
<span class="t" style="left:192px;top:530px;font-size:13px;line-height:15px;color:#707070;transform:scale(1.0000,1.1000);transform-origin:0 12px;">RPL GR</span>
<div style="left:301px;top:526px;width:446px;height:24px;background:#b5d4b5;border:1px solid;border-color:#808080 #fff #fff #808080;box-shadow:inset 1px 1px #6a6a6a,inset -1px -1px #dfdfdf;box-sizing:border-box"></div>
<span class="t" style="left:304px;top:530px;font-size:13px;line-height:15px;color:#707070;transform:scale(1.0000,1.1000);transform-origin:0 12px;">RPL GRANTED</span>
<span class="t" style="right:758px;top:547px;font-size:13px;line-height:15px;color:#000;transform:scale(1.0000,1.1000);transform-origin:100% 12px;">System Adv Stnd</span>
<span class="t" style="right:754px;top:565px;font-size:13px;line-height:15px;color:#000;transform:scale(1.0000,1.1000);transform-origin:100% 12px;">Recog Type:</span>
<div style="left:189px;top:551px;width:109px;height:24px;background:#b5d4b5;border:1px solid;border-color:#808080 #fff #fff #808080;box-shadow:inset 1px 1px #6a6a6a,inset -1px -1px #dfdfdf;box-sizing:border-box"></div>
<span class="t" style="left:192px;top:555px;font-size:13px;line-height:15px;color:#707070;transform:scale(1.0000,1.1000);transform-origin:0 12px;">CREDIT</span>
<span class="t" style="left:752px;top:498px;font-size:13px;line-height:15px;color:#000;transform:scale(1.0000,1.1000);transform-origin:0 12px;">Last Year Of</span>
<span class="t" style="left:752px;top:516px;font-size:13px;line-height:15px;color:#000;transform:scale(1.0000,1.1000);transform-origin:0 12px;">Enrolment:</span>
<span class="t" style="right:109px;top:534px;font-size:13px;line-height:15px;color:#000;transform:scale(1.0000,1.1000);transform-origin:100% 12px;">Completed</span>
<div style="left:835px;top:502px;width:57px;height:24px;background:#b5d4b5;border:1px solid;border-color:#808080 #fff #fff #808080;box-shadow:inset 1px 1px #6a6a6a,inset -1px -1px #dfdfdf;box-sizing:border-box"></div>
<div style="left:835px;top:533px;width:13px;height:13px;background:#fff;box-sizing:border-box;border:1px solid;border-color:#808080 #fff #fff #808080;box-shadow:inset 1px 1px #646464,inset -1px -1px #dfdfdf"></div>
<svg style="left:869px;top:527px" width="22" height="25" viewBox="0 0 22 25">
<defs><radialGradient id="hb869_527" cx="0.68" cy="0.25" r="0.8"><stop offset="0" stop-color="#f0faff"/><stop offset="0.16" stop-color="#7ccaff"/><stop offset="0.45" stop-color="#1c8ee8"/><stop offset="0.8" stop-color="#0a5cb4"/><stop offset="1" stop-color="#04386e"/></radialGradient></defs>
<path d="M1 8.2 L5.5 7.2 L8 11 L6.5 13 L2.5 12.8 Z" fill="#f0d020"/>
<path d="M4 11.5 L9 10.5 L12.5 13.5 L11 15 L5 14.5 Z" fill="#8a7a10"/>
<ellipse cx="13.8" cy="7" rx="8" ry="6.6" fill="#1a1a1a" opacity="0.55"/>
<ellipse cx="13" cy="6.3" rx="7.8" ry="6.2" fill="url(#hb869_527)"/>
<rect x="4" y="15.3" width="16.5" height="9.1" fill="#000"/>
<path d="M4 16h3.2v2.5h2.4v-2.5h3.1v7.6h-3.1v-3.1h-2.4v3.1h-3.2z" fill="#fff"/>
<path d="M13.4 16h6.2v1.7h-3.1v1.1h2.8v1.6h-2.8v1.4h3.1v1.8h-6.2z" fill="#fff"/>
</svg>
<div style="left:709px;top:609px;width:158px;height:24px;box-sizing:border-box;border:1px solid;border-color:#fff #6c6c6c #6c6c6c #fff;box-shadow:inset -1px -1px #8c8c8c,inset 1px 1px #e8e8e8;background:#bebebe"></div>
<span class="t" style="left:730px;top:614px;font-size:13px;line-height:15px;color:#000;transform:scale(1.0000,1.1000);transform-origin:0 12px;">Unit Level Details(+)</span>
</body></html>
